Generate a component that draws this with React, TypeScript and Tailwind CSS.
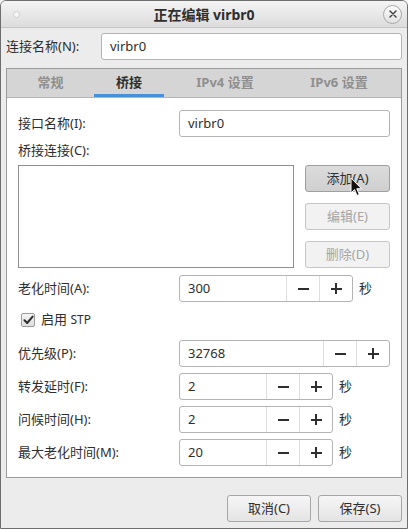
import React from "react";

const font = { fontFamily: '"Noto Sans", "Noto Sans CJK SC", sans-serif' };

function Spin({ value, entryW, unit }: { value: string; entryW: number; unit?: boolean }) {
  return (
    <div className="flex items-center">
      <div className="flex h-[27px] rounded-[3px] border border-[#b4b4b4] bg-white overflow-hidden">
        <div className="flex items-center pl-[8px] text-[13px] text-[#2e2e2e]" style={{ width: entryW }}>
          {value}
        </div>
        <div className="w-[33px] flex items-center justify-center border-l border-[#dedede]">
          <div className="w-[11px] h-[2px] bg-[#2e2e2e]" />
        </div>
        <div className="w-[33px] flex items-center justify-center border-l border-[#dedede] relative">
          <div className="w-[11px] h-[2px] bg-[#2e2e2e]" />
          <div className="absolute w-[2px] h-[11px] bg-[#2e2e2e]" />
        </div>
      </div>
      {unit && <span className="ml-[6px] text-[13px] text-[#2e2e2e]">秒</span>}
    </div>
  );
}

function Label({ children }: { children: React.ReactNode }) {
  return <div className="w-[161px] text-[13px] text-[#2e2e2e]">{children}</div>;
}

export default function App() {
  return (
    <div
      className="w-[408px] h-[529px] flex flex-col bg-[#ececec] border border-[#6e6e6e] rounded-t-[6px] overflow-hidden relative"
      style={font}
    >
      {/* title bar */}
      <div className="h-[27px] shrink-0 flex items-center justify-between px-[11px] bg-gradient-to-b from-[#f4f4f4] to-[#dcdcdc] border-b border-[#c4c4c4] relative">
        <div className="w-[7px] h-[7px] rounded-full bg-[#f6f6f6] border border-[#cfcfcf] ml-[1px]" />
        <div className="absolute inset-x-0 top-0 h-[27px] flex items-center justify-center text-[14px] font-bold text-[#2e2e2e]">
          正在编辑 virbr0
        </div>
        <div className="w-[19px] h-[19px] rounded-full border border-[#a8a8a8] bg-gradient-to-b from-[#fafafa] to-[#e2e2e2] flex items-center justify-center relative mr-[-6px]">
          <svg width="8" height="8" viewBox="0 0 8 8">
            <path d="M1 1L7 7M7 1L1 7" stroke="#3a3a3a" strokeWidth="1.4" strokeLinecap="round" />
          </svg>
        </div>
      </div>

      {/* connection name */}
      <div className="flex items-center mt-[5px] pl-[5px] pr-[5px]">
        <div className="w-[95px] text-[13px] text-[#2e2e2e]">连接名称(N):</div>
        <div className="flex-1 h-[27px] rounded-[3px] border border-[#b4b4b4] bg-white flex items-center pl-[8px] text-[13px] text-[#2e2e2e]">
          virbr0
        </div>
      </div>

      {/* notebook */}
      <div className="mx-[5px] mt-[8px] border border-[#9c9c9c] flex flex-col">
        <div className="h-[29px] bg-[#d5d5d5] border-b border-[#b4b4b4] flex text-[13px] font-bold">
          <div className="w-[87px] flex items-center justify-center text-[#8f8f8f]">常规</div>
          <div className="w-[70px] flex items-center justify-center text-[#2e2e2e] border-b-[3px] border-[#4a90d9] pt-[3px]">桥接</div>
          <div className="w-[122px] flex items-center justify-center text-[#8f8f8f]">IPv4 设置</div>
          <div className="w-[106px] flex items-center justify-center text-[#8f8f8f]">IPv6 设置</div>
        </div>
        <div className="bg-white flex flex-col px-[11px] pt-[12px] pb-[11px]">
          <div className="flex items-center">
            <Label>接口名称(I):</Label>
            <div className="flex-1 h-[27px] rounded-[3px] border border-[#b4b4b4] bg-white flex items-center pl-[8px] text-[13px] text-[#2e2e2e]">
              virbr0
            </div>
          </div>
          <div className="h-[28px] flex items-center text-[13px] text-[#2e2e2e]">桥接连接(C):</div>
          <div className="flex gap-[11px] h-[103px]">
            <div className="flex-1 border border-[#8e8e8e] bg-white" />
            <div className="w-[85px] flex flex-col gap-[11px]">
              <div className="h-[27px] rounded-[3px] border border-[#9f9f9f] bg-gradient-to-b from-[#dcdcdc] to-[#cfcfcf] flex items-center justify-center text-[13px] text-[#2e2e2e]">
                添加(A)
              </div>
              <div className="h-[27px] rounded-[3px] border border-[#c6c6c6] bg-[#f2f2f2] flex items-center justify-center text-[13px] text-[#a6a6a6]">
                编辑(E)
              </div>
              <div className="h-[27px] rounded-[3px] border border-[#c6c6c6] bg-[#f2f2f2] flex items-center justify-center text-[13px] text-[#a6a6a6]">
                删除(D)
              </div>
            </div>
          </div>
          <div className="flex items-center mt-[7px]">
            <Label>老化时间(A):</Label>
            <Spin value="300" entryW={106} unit />
          </div>
          <div className="flex items-center mt-[8px] h-[19px] pl-[3px]">
            <div className="w-[14px] h-[14px] rounded-[2px] border border-[#9a9a9a] bg-gradient-to-b from-[#f6f6f6] to-[#dedede] flex items-center justify-center">
              <svg width="11" height="10" viewBox="0 0 11 10">
                <path d="M1.5 5.2L4.2 8L9.6 1.6" stroke="#2e2e2e" strokeWidth="2" fill="none" strokeLinecap="round" strokeLinejoin="round" />
              </svg>
            </div>
            <span className="ml-[6px] text-[13px] text-[#2e2e2e]">启用 <span className="text-[12px]">STP</span></span>
          </div>
          <div className="flex items-center mt-[11px]">
            <Label>优先级(P):</Label>
            <Spin value="32768" entryW={143} />
          </div>
          <div className="flex items-center mt-[6px]">
            <Label>转发延时(F):</Label>
            <Spin value="2" entryW={86} unit />
          </div>
          <div className="flex items-center mt-[6px]">
            <Label>问候时间(H):</Label>
            <Spin value="2" entryW={86} unit />
          </div>
          <div className="flex items-center mt-[6px]">
            <Label>最大老化时间(M):</Label>
            <Spin value="20" entryW={86} unit />
          </div>
        </div>
      </div>

      {/* bottom buttons */}
      <div className="flex justify-end gap-[7px] pr-[5px] mt-[17px]">
        <div className="w-[84px] h-[27px] rounded-[3px] border border-[#a6a6a6] bg-gradient-to-b from-[#f6f6f6] to-[#e4e4e4] flex items-center justify-center text-[13px] text-[#2e2e2e]">
          取消(C)
        </div>
        <div className="w-[84px] h-[27px] rounded-[3px] border border-[#a6a6a6] bg-gradient-to-b from-[#f6f6f6] to-[#e4e4e4] flex items-center justify-center text-[13px] text-[#2e2e2e]">
          保存(S)
        </div>
      </div>

      {/* mouse cursor */}
      <svg className="absolute left-[349px] top-[176px]" width="13" height="20" viewBox="0 0 13 20">
        <path d="M1 1V16L4.5 12.5L7 18.5L9.3 17.5L6.8 11.7H11.5Z" fill="#111" stroke="#fff" strokeWidth="1" strokeLinejoin="round" />
      </svg>
    </div>
  );
}
